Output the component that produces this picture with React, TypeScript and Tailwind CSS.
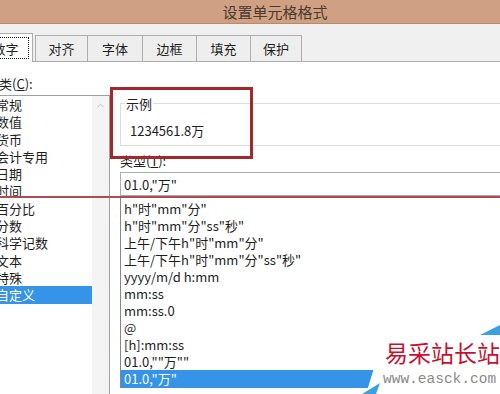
import { ChevronUp } from "lucide-react";

const tabs = [
  { label: "对齐", w: "w-[52px]" },
  { label: "字体", w: "w-[55px]" },
  { label: "边框", w: "w-[54px]" },
  { label: "填充", w: "w-[54px]" },
  { label: "保护", w: "w-[52px]" },
];

const categories = ["常规", "数值", "货币", "会计专用", "日期", "时间", "百分比", "分数", "科学记数", "文本", "特殊", "自定义"];

const formats = [
  'h"时"mm"分"',
  'h"时"mm"分"ss"秒"',
  '上午/下午h"时"mm"分"',
  '上午/下午h"时"mm"分"ss"秒"',
  "yyyy/m/d h:mm",
  "mm:ss",
  "mm:ss.0",
  "@",
  "[h]:mm:ss",
  '01.0,""万""',
  '01.0,"万"',
];

function Watermark() {
  return (
    <div className="absolute right-0 bottom-0 w-[140px] h-[76px]">
      <svg className="absolute inset-0" width="140" height="76" viewBox="0 0 140 76">
        <polygon points="6,76 14,50 22,4 140,4 140,76" fill="#ffffff" />
        <polygon points="120,17 140,7 140,17" fill="#3aa0e0" />
        <polygon points="2,76 20,65 16,76" fill="#3aa0e0" />
      </svg>
      <div className="absolute left-[25px] top-[20px] text-[23px] leading-[28px] tracking-[0px] text-[#c8102e] whitespace-nowrap">
        易采站长站
      </div>
      <div className="absolute left-[23px] top-[52px] text-[14.5px] leading-[18px] text-[#8a8a8a] whitespace-nowrap font-['Liberation_Mono',monospace]">
        www.easck.com
      </div>
    </div>
  );
}

export default function App() {
  return (
    <div className="relative w-[500px] h-[394px] overflow-hidden bg-white text-[13px] text-[#1e1e1e] font-['Noto_Sans_CJK_SC','Microsoft_YaHei',sans-serif]">
      {/* title bar */}
      <div className="h-[24px] bg-[#d0a083] border-b border-[#b48a70] flex items-center justify-center pl-[50px] text-[15px] leading-[20px] text-[#4a3a30]">
        设置单元格格式
      </div>

      {/* tab strip */}
      <div className="h-[38px] bg-[#f0f0f0] flex items-end">
        <div className="ml-[-22px] w-[55px] h-[29px] bg-white border border-b-0 border-[#adadad] p-[3px]">
          <div className="h-full border border-dotted border-[#222] flex items-center justify-center leading-[17px]">
            数字
          </div>
        </div>
        <div className="flex-1 flex items-end border-b border-[#adadad] h-[29px] pl-[2px]">
          {tabs.map((t, i) => (
            <div
              key={t.label}
              className={`${t.w} h-[26px] flex items-center justify-center border-t border-l border-[#adadad] bg-[#eeeeee] leading-[17px] ${i === tabs.length - 1 ? "border-r" : ""}`}
            >
              {t.label}
            </div>
          ))}
        </div>
      </div>

      {/* content */}
      <div className="flex">
        {/* category column */}
        <div className="ml-[-14px] w-[124px] shrink-0">
          <div className="mt-[13px] h-[17px] leading-[17px]">
            分类(<span className="underline">C</span>):
          </div>
          <div className="mt-[3px] ml-[7px] w-[117px] h-[320px] border border-r border-[#a0a0a0] flex">
            <div className="flex-1 pt-[0px]">
              {categories.map((c) => (
                <div
                  key={c}
                  className={`h-[17.3px] leading-[17.3px] pl-[2px] whitespace-nowrap ${c === "自定义" ? "bg-[#3593e8] text-white" : ""}`}
                >
                  {c}
                </div>
              ))}
            </div>
            <div className="w-[17px] bg-[#f4f4f4] flex justify-center pt-[4px]">
              <ChevronUp size={11} strokeWidth={2} className="text-[#bcbcbc]" />
            </div>
          </div>
        </div>

        {/* type column */}
        <div className="ml-[10px] w-[420px] shrink-0">
          <fieldset className="mt-[32.5px] h-[51px] border border-[#dcdcdc] px-0">
            <legend className="ml-[4px] px-[1px] leading-[17px]">示例</legend>
            <div className="mt-[10px] pl-[9px] leading-[17px]">1234561.8万</div>
          </fieldset>
          <div className="mt-[6px] h-[17px] leading-[17px]">
            类型(<span className="underline">T</span>):
          </div>
          <div className="mt-[3.5px] h-[24px] border border-[#abadb3] pl-[3px] flex items-center leading-[17px]">
            01.0,"万"
          </div>
          <div className="mt-[1px] h-[191px] border border-[#828790] pt-[1.5px]">
            {formats.map((f, i) => (
              <div
                key={f}
                className={`h-[17.1px] leading-[17.1px] pl-[3px] whitespace-nowrap ${i === formats.length - 1 ? "bg-[#3593e8] text-white" : ""}`}
              >
                {f}
              </div>
            ))}
          </div>
        </div>
      </div>

      {/* annotations */}
      <div className="absolute left-[110px] top-[87px] w-[143px] h-[72px] border-[3px] border-[#a3282b]" />
      <div className="absolute left-0 top-[196px] w-full h-[2px] border-t border-[#d23c48] border-b border-b-[#8c5a5a]" />

      <Watermark />
    </div>
  );
}
